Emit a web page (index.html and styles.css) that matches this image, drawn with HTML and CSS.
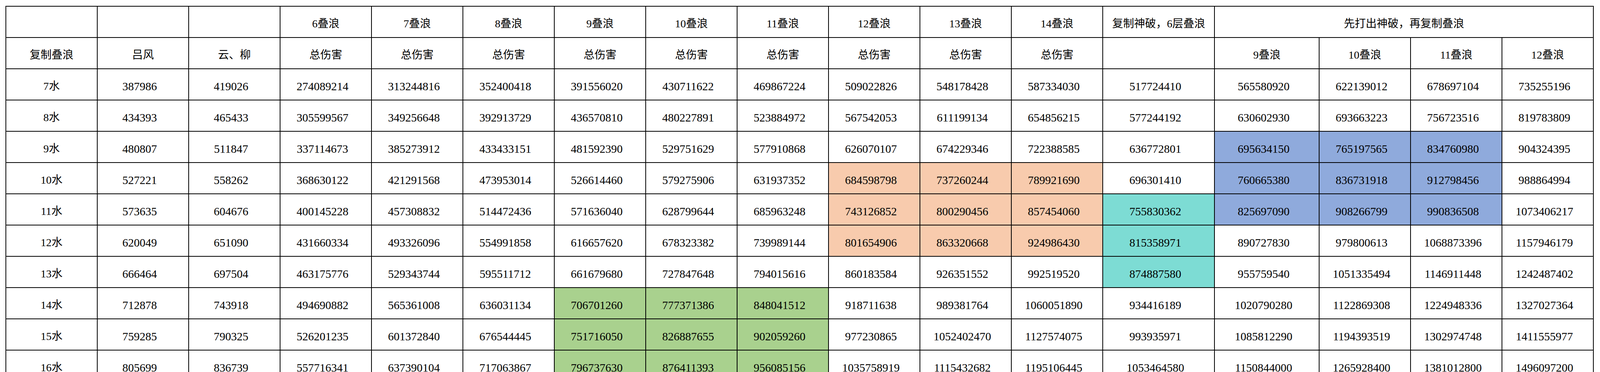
FILE: index.html
```html
<!DOCTYPE html>
<html lang="zh-CN">
<head>
<meta charset="utf-8">
<title>叠浪伤害表</title>
<link rel="stylesheet" href="styles.css">
</head>
<body>
<table class="sheet">
<colgroup>
<col class="c"><col class="c"><col class="c"><col class="c"><col class="c"><col class="c"><col class="c"><col class="c"><col class="c"><col class="c"><col class="c"><col class="c">
<col class="cw"><col class="cm"><col class="c"><col class="c"><col class="c">
</colgroup>
<tbody>
<tr><td></td><td></td><td></td><td>6叠浪</td><td>7叠浪</td><td>8叠浪</td><td>9叠浪</td><td>10叠浪</td><td>11叠浪</td><td>12叠浪</td><td>13叠浪</td><td>14叠浪</td><td>复制神破，6层叠浪</td><td colspan="4">先打出神破，再复制叠浪</td></tr>
<tr><td>复制叠浪</td><td>吕风</td><td>云、柳</td><td>总伤害</td><td>总伤害</td><td>总伤害</td><td>总伤害</td><td>总伤害</td><td>总伤害</td><td>总伤害</td><td>总伤害</td><td>总伤害</td><td></td><td>9叠浪</td><td>10叠浪</td><td>11叠浪</td><td>12叠浪</td></tr>
<tr><td>7水</td><td class="n"><span>387986</span></td><td class="n"><span>419026</span></td><td class="n"><span>274089214</span></td><td class="n"><span>313244816</span></td><td class="n"><span>352400418</span></td><td class="n"><span>391556020</span></td><td class="n"><span>430711622</span></td><td class="n"><span>469867224</span></td><td class="n"><span>509022826</span></td><td class="n"><span>548178428</span></td><td class="n"><span>587334030</span></td><td class="n"><span>517724410</span></td><td class="n"><span>565580920</span></td><td class="n"><span>622139012</span></td><td class="n"><span>678697104</span></td><td class="n"><span>735255196</span></td></tr>
<tr><td>8水</td><td class="n"><span>434393</span></td><td class="n"><span>465433</span></td><td class="n"><span>305599567</span></td><td class="n"><span>349256648</span></td><td class="n"><span>392913729</span></td><td class="n"><span>436570810</span></td><td class="n"><span>480227891</span></td><td class="n"><span>523884972</span></td><td class="n"><span>567542053</span></td><td class="n"><span>611199134</span></td><td class="n"><span>654856215</span></td><td class="n"><span>577244192</span></td><td class="n"><span>630602930</span></td><td class="n"><span>693663223</span></td><td class="n"><span>756723516</span></td><td class="n"><span>819783809</span></td></tr>
<tr><td>9水</td><td class="n"><span>480807</span></td><td class="n"><span>511847</span></td><td class="n"><span>337114673</span></td><td class="n"><span>385273912</span></td><td class="n"><span>433433151</span></td><td class="n"><span>481592390</span></td><td class="n"><span>529751629</span></td><td class="n"><span>577910868</span></td><td class="n"><span>626070107</span></td><td class="n"><span>674229346</span></td><td class="n"><span>722388585</span></td><td class="n"><span>636772801</span></td><td class="n blue"><span>695634150</span></td><td class="n blue"><span>765197565</span></td><td class="n blue"><span>834760980</span></td><td class="n"><span>904324395</span></td></tr>
<tr><td>10水</td><td class="n"><span>527221</span></td><td class="n"><span>558262</span></td><td class="n"><span>368630122</span></td><td class="n"><span>421291568</span></td><td class="n"><span>473953014</span></td><td class="n"><span>526614460</span></td><td class="n"><span>579275906</span></td><td class="n"><span>631937352</span></td><td class="n peach"><span>684598798</span></td><td class="n peach"><span>737260244</span></td><td class="n peach"><span>789921690</span></td><td class="n"><span>696301410</span></td><td class="n blue"><span>760665380</span></td><td class="n blue"><span>836731918</span></td><td class="n blue"><span>912798456</span></td><td class="n"><span>988864994</span></td></tr>
<tr><td>11水</td><td class="n"><span>573635</span></td><td class="n"><span>604676</span></td><td class="n"><span>400145228</span></td><td class="n"><span>457308832</span></td><td class="n"><span>514472436</span></td><td class="n"><span>571636040</span></td><td class="n"><span>628799644</span></td><td class="n"><span>685963248</span></td><td class="n peach"><span>743126852</span></td><td class="n peach"><span>800290456</span></td><td class="n peach"><span>857454060</span></td><td class="n teal"><span>755830362</span></td><td class="n blue"><span>825697090</span></td><td class="n blue"><span>908266799</span></td><td class="n blue"><span>990836508</span></td><td class="n"><span>1073406217</span></td></tr>
<tr><td>12水</td><td class="n"><span>620049</span></td><td class="n"><span>651090</span></td><td class="n"><span>431660334</span></td><td class="n"><span>493326096</span></td><td class="n"><span>554991858</span></td><td class="n"><span>616657620</span></td><td class="n"><span>678323382</span></td><td class="n"><span>739989144</span></td><td class="n peach"><span>801654906</span></td><td class="n peach"><span>863320668</span></td><td class="n peach"><span>924986430</span></td><td class="n teal"><span>815358971</span></td><td class="n"><span>890727830</span></td><td class="n"><span>979800613</span></td><td class="n"><span>1068873396</span></td><td class="n"><span>1157946179</span></td></tr>
<tr><td>13水</td><td class="n"><span>666464</span></td><td class="n"><span>697504</span></td><td class="n"><span>463175776</span></td><td class="n"><span>529343744</span></td><td class="n"><span>595511712</span></td><td class="n"><span>661679680</span></td><td class="n"><span>727847648</span></td><td class="n"><span>794015616</span></td><td class="n"><span>860183584</span></td><td class="n"><span>926351552</span></td><td class="n"><span>992519520</span></td><td class="n teal"><span>874887580</span></td><td class="n"><span>955759540</span></td><td class="n"><span>1051335494</span></td><td class="n"><span>1146911448</span></td><td class="n"><span>1242487402</span></td></tr>
<tr><td>14水</td><td class="n"><span>712878</span></td><td class="n"><span>743918</span></td><td class="n"><span>494690882</span></td><td class="n"><span>565361008</span></td><td class="n"><span>636031134</span></td><td class="n green"><span>706701260</span></td><td class="n green"><span>777371386</span></td><td class="n green"><span>848041512</span></td><td class="n"><span>918711638</span></td><td class="n"><span>989381764</span></td><td class="n"><span>1060051890</span></td><td class="n"><span>934416189</span></td><td class="n"><span>1020790280</span></td><td class="n"><span>1122869308</span></td><td class="n"><span>1224948336</span></td><td class="n"><span>1327027364</span></td></tr>
<tr><td>15水</td><td class="n"><span>759285</span></td><td class="n"><span>790325</span></td><td class="n"><span>526201235</span></td><td class="n"><span>601372840</span></td><td class="n"><span>676544445</span></td><td class="n green"><span>751716050</span></td><td class="n green"><span>826887655</span></td><td class="n green"><span>902059260</span></td><td class="n"><span>977230865</span></td><td class="n"><span>1052402470</span></td><td class="n"><span>1127574075</span></td><td class="n"><span>993935971</span></td><td class="n"><span>1085812290</span></td><td class="n"><span>1194393519</span></td><td class="n"><span>1302974748</span></td><td class="n"><span>1411555977</span></td></tr>
<tr><td>16水</td><td class="n"><span>805699</span></td><td class="n"><span>836739</span></td><td class="n"><span>557716341</span></td><td class="n"><span>637390104</span></td><td class="n"><span>717063867</span></td><td class="n green"><span>796737630</span></td><td class="n green"><span>876411393</span></td><td class="n green"><span>956085156</span></td><td class="n"><span>1035758919</span></td><td class="n"><span>1115432682</span></td><td class="n"><span>1195106445</span></td><td class="n"><span>1053464580</span></td><td class="n"><span>1150844000</span></td><td class="n"><span>1265928400</span></td><td class="n"><span>1381012800</span></td><td class="n"><span>1496097200</span></td></tr>
</tbody>
</table>
</body>
</html>
```

FILE: styles.css
```css
html {
  overflow: hidden;
}

html, body {
  margin: 0;
  padding: 0;
  background: #ffffff;
}

/* Sheet scales with the window width (designed for 4374px: 250px columns, 80px rows). */
.sheet {
  border-collapse: collapse;
  table-layout: fixed;
  width: 99.27vw;
  margin: 15px 0 0 0.343vw;
  font-family: "Liberation Serif", "Noto Sans CJK SC", serif;
  font-size: 28px;
  color: #000000;
}

.c { width: 5.758%; }
.cw { width: 7.047%; }
.cm { width: 6.587%; }

.sheet td {
  border: 2px solid #000000;
  padding: 24px 0 14px 0;
  line-height: 40px;
  text-align: center;
  vertical-align: middle;
  white-space: nowrap;
  overflow: hidden;
  background: #ffffff;
}

.sheet td.n {
  font-size: 29.5px;
}

.sheet td.n span {
  padding-right: 17px;
}

.sheet td.peach { background: #f8cbad; }
.sheet td.blue { background: #8faadc; }
.sheet td.teal { background: #7ddcd4; }
.sheet td.green { background: #a9d18e; }
```
